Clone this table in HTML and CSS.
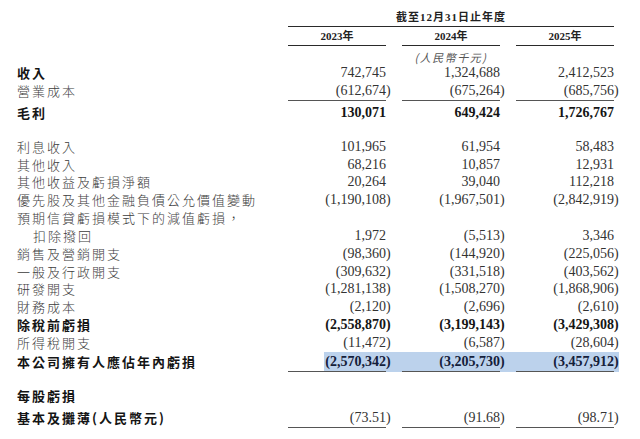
FILE: index.html
```html
<!DOCTYPE html>
<html lang="zh-Hant">
<head>
<meta charset="utf-8">
<title>損益表</title>
<link rel="stylesheet" href="styles.css">
</head>
<body>
<div class="sheet">
  <div class="row head">
    <div></div>
    <div class="period">截至12月31日止年度</div>
  </div>
  <div class="row years">
    <div></div>
    <div class="yr">2023年</div>
    <div class="yr">2024年</div>
    <div class="yr">2025年</div>
  </div>
  <div class="row unit">
    <div></div>
    <div class="cur">(人民幣千元)</div>
  </div>

  <div class="row b">
    <div class="lbl">收入</div>
    <div class="num">742,745</div>
    <div class="num">1,324,688</div>
    <div class="num">2,412,523</div>
  </div>
  <div class="row ruled">
    <div class="lbl">營業成本</div>
    <div class="num">(612,674<span class="p">)</span></div>
    <div class="num">(675,264<span class="p">)</span></div>
    <div class="num">(685,756<span class="p">)</span></div>
  </div>
  <div class="row strong after-rule">
    <div class="lbl">毛利</div>
    <div class="num">130,071</div>
    <div class="num">649,424</div>
    <div class="num">1,726,767</div>
  </div>

  <div class="row gap-before">
    <div class="lbl">利息收入</div>
    <div class="num">101,965</div>
    <div class="num">61,954</div>
    <div class="num">58,483</div>
  </div>
  <div class="row">
    <div class="lbl">其他收入</div>
    <div class="num">68,216</div>
    <div class="num">10,857</div>
    <div class="num">12,931</div>
  </div>
  <div class="row">
    <div class="lbl">其他收益及虧損淨額</div>
    <div class="num">20,264</div>
    <div class="num">39,040</div>
    <div class="num">112,218</div>
  </div>
  <div class="row">
    <div class="lbl">優先股及其他金融負債公允價值變動</div>
    <div class="num">(1,190,108<span class="p">)</span></div>
    <div class="num">(1,967,501<span class="p">)</span></div>
    <div class="num">(2,842,919<span class="p">)</span></div>
  </div>
  <div class="row">
    <div class="lbl">預期信貸虧損模式下的減值虧損，</div>
    <div></div><div></div><div></div>
  </div>
  <div class="row">
    <div class="lbl indent">扣除撥回</div>
    <div class="num">1,972</div>
    <div class="num">(5,513<span class="p">)</span></div>
    <div class="num">3,346</div>
  </div>
  <div class="row">
    <div class="lbl">銷售及營銷開支</div>
    <div class="num">(98,360<span class="p">)</span></div>
    <div class="num">(144,920<span class="p">)</span></div>
    <div class="num">(225,056<span class="p">)</span></div>
  </div>
  <div class="row">
    <div class="lbl">一般及行政開支</div>
    <div class="num">(309,632<span class="p">)</span></div>
    <div class="num">(331,518<span class="p">)</span></div>
    <div class="num">(403,562<span class="p">)</span></div>
  </div>
  <div class="row">
    <div class="lbl">研發開支</div>
    <div class="num">(1,281,138<span class="p">)</span></div>
    <div class="num">(1,508,270<span class="p">)</span></div>
    <div class="num">(1,868,906<span class="p">)</span></div>
  </div>
  <div class="row">
    <div class="lbl">財務成本</div>
    <div class="num">(2,120<span class="p">)</span></div>
    <div class="num">(2,696<span class="p">)</span></div>
    <div class="num">(2,610<span class="p">)</span></div>
  </div>
  <div class="row strong">
    <div class="lbl">除稅前虧損</div>
    <div class="num">(2,558,870<span class="p">)</span></div>
    <div class="num">(3,199,143<span class="p">)</span></div>
    <div class="num">(3,429,308<span class="p">)</span></div>
  </div>
  <div class="row">
    <div class="lbl">所得稅開支</div>
    <div class="num">(11,472<span class="p">)</span></div>
    <div class="num">(6,587<span class="p">)</span></div>
    <div class="num">(28,604<span class="p">)</span></div>
  </div>
  <div class="row strong total">
    <div class="lbl">本公司擁有人應佔年內虧損</div>
    <div class="hl">
      <div class="num ul">(2,570,342<span class="p">)</span></div>
      <div class="num ul">(3,205,730<span class="p">)</span></div>
      <div class="num ul">(3,457,912<span class="p">)</span></div>
    </div>
  </div>

  <div class="row strong eps-head">
    <div class="lbl">每股虧損</div>
  </div>
  <div class="row eps">
    <div class="lbl b-lbl">基本及攤薄(人民幣元)</div>
    <div class="num ul">(73.51<span class="p">)</span></div>
    <div class="num ul">(91.68<span class="p">)</span></div>
    <div class="num ul">(98.71<span class="p">)</span></div>
  </div>
</div>
</body>
</html>
```

FILE: styles.css
```css
html, body {
  margin: 0;
  background: #ffffff;
}

body {
  font-family: "Liberation Serif", "Noto Sans CJK TC", serif;
  color: #333333;
}

.sheet {
  padding: 8px 0 0 17px;
  width: 620px;
}

.row {
  display: grid;
  grid-template-columns: 255px 98px 98px 98px;
  column-gap: 16px;
  height: 17.85px;
  line-height: 17.85px;
  font-size: 14px;
}

.lbl {
  font-family: "Noto Sans CJK TC", "Noto Sans CJK SC", sans-serif;
  font-size: 13px;
  letter-spacing: 2px;
  white-space: nowrap;
  color: #3c3c3c;
  font-weight: 300;
}

.indent {
  padding-left: 16px;
}

.num {
  text-align: right;
  white-space: nowrap;
}

.p {
  margin-right: -4.7px;
}

.row.b .lbl,
.strong .lbl,
.b-lbl {
  font-weight: 700;
  color: #151515;
}

.strong .num {
  font-weight: 700;
  color: #151515;
}

/* header */
.head {
  height: 19px;
  line-height: 18px;
}

.period {
  grid-column: 2 / 5;
  text-align: center;
  font-size: 11px;
  font-weight: 700;
  letter-spacing: 1px;
  color: #222222;
  border-bottom: 1px solid #2a2a2a;
}

.years {
  height: 19px;
  line-height: 18px;
}

.yr {
  text-align: center;
  font-size: 11px;
  font-weight: 700;
  color: #222222;
  border-bottom: 1px solid #2a2a2a;
}

.unit {
  height: 18px;
  line-height: 14px;
}

.cur {
  grid-column: 2 / 5;
  text-align: center;
  padding-top: 4px;
  font-family: "Noto Sans CJK TC", sans-serif;
  font-size: 11px;
  font-style: italic;
  letter-spacing: 1.5px;
  color: #555555;
}

/* rules */
.ruled .num,
.ul {
  border-bottom: 1px solid #555555;
}

.ruled {
  height: 19px;
  line-height: 18px;
}

.after-rule {
  margin-top: 3px;
}

.gap-before {
  margin-top: 16px;
}

.total {
  height: 19.5px;
  line-height: 19px;
}

.hl {
  grid-column: 2 / 5;
  display: grid;
  grid-template-columns: 98px 98px 98px;
  column-gap: 16px;
  margin-right: -5px;
  background: linear-gradient(to right, transparent 36px, #bcd2ec 36px);
}

.hl .num {
  color: #14203a;
}

.eps-head {
  margin-top: 16px;
}

.eps {
  margin-top: 4px;
  height: 18.5px;
  line-height: 17px;
}
```
